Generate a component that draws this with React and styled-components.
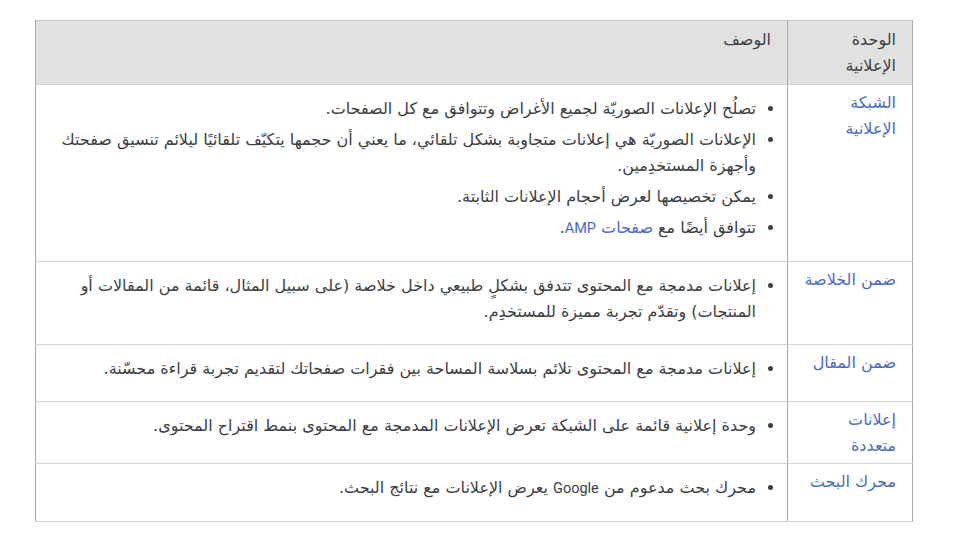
import React from 'react';
import styled, { createGlobalStyle } from 'styled-components';

const GlobalStyle = createGlobalStyle`
  body {
    margin: 0;
    background: #fff;
  }
`;

const Page = styled.div`
  direction: rtl;
  padding: 20px 40px 0 35px;
  font-family: "DejaVu Sans", sans-serif;
  font-size: 16px;
  color: #3c4043;
`;

const Table = styled.table`
  width: 100%;
  border-collapse: collapse;
  text-align: right;
`;

const HeadRow = styled.tr`
  background: #e1e1e1;
`;

const Th = styled.th`
  font-weight: normal;
  text-align: right;
  vertical-align: top;
  line-height: 26px;
  padding: 6px 16px 5px;
  width: ${props => (props.narrow ? '92px' : 'auto')};
  border-top: 1px solid #c8c8c8;
  border-bottom: 1px solid #d0d0d0;
  border-left: 1px solid #a8a8a8;
  border-right: 1px solid #a8a8a8;
`;

const Td = styled.td`
  vertical-align: top;
  line-height: 26px;
  padding: ${props => (props.unit ? '5px 16px 4px' : '0 16px')};
  border-top: 1px solid #d3d3d3;
  border-bottom: 1px solid #d3d3d3;
  border-left: 1px solid #a8a8a8;
  border-right: 1px solid #a8a8a8;
`;

const Link = styled.a`
  color: #4a6cc7;
  text-decoration: none;
`;

const Latin = styled.span`
  font-family: "Roboto", "Liberation Sans", sans-serif;
  font-size: 14.5px;
`;

const List = styled.ul`
  margin: 11px 0 19px;
  padding: 0 15px 0 0;
`;

const Item = styled.li`
  line-height: 26px;
  margin-bottom: 5px;
`;

const rows = [
  {
    unit: 'الشبكة الإعلانية',
    items: [
      'تصلُح الإعلانات الصوريّة لجميع الأغراض وتتوافق مع كل الصفحات.',
      'الإعلانات الصوريّة هي إعلانات متجاوبة بشكل تلقائي، ما يعني أن حجمها يتكيّف تلقائيًا ليلائم تنسيق صفحتك وأجهزة المستخدِمين.',
      'يمكن تخصيصها لعرض أحجام الإعلانات الثابتة.',
      <>تتوافق أيضًا مع <Link href="#">صفحات <Latin>AMP</Latin></Link>.</>
    ]
  },
  {
    unit: 'ضمن الخلاصة',
    items: [
      'إعلانات مدمجة مع المحتوى تتدفق بشكلٍ طبيعي داخل خلاصة (على سبيل المثال، قائمة من المقالات أو المنتجات) وتقدّم تجربة مميزة للمستخدِم.'
    ]
  },
  {
    unit: 'ضمن المقال',
    items: [
      'إعلانات مدمجة مع المحتوى تلائم بسلاسة المساحة بين فقرات صفحاتك لتقديم تجربة قراءة محسّنة.'
    ]
  },
  {
    unit: 'إعلانات متعددة',
    items: [
      'وحدة إعلانية قائمة على الشبكة تعرض الإعلانات المدمجة مع المحتوى بنمط اقتراح المحتوى.'
    ]
  },
  {
    unit: 'محرك البحث',
    items: [
      <>محرك بحث مدعوم من <Latin>Google</Latin> يعرض الإعلانات مع نتائج البحث.</>
    ]
  }
];

export default function App() {
  return (
    <Page>
      <GlobalStyle />
      <Table>
        <thead>
          <HeadRow>
            <Th narrow>الوحدة الإعلانية</Th>
            <Th>الوصف</Th>
          </HeadRow>
        </thead>
        <tbody>
          {rows.map((row, r) => (
            <tr key={r}>
              <Td unit>
                <Link href="#">{row.unit}</Link>
              </Td>
              <Td>
                <List>
                  {row.items.map((item, i) => (
                    <Item key={i}>{item}</Item>
                  ))}
                </List>
              </Td>
            </tr>
          ))}
        </tbody>
      </Table>
    </Page>
  );
}
